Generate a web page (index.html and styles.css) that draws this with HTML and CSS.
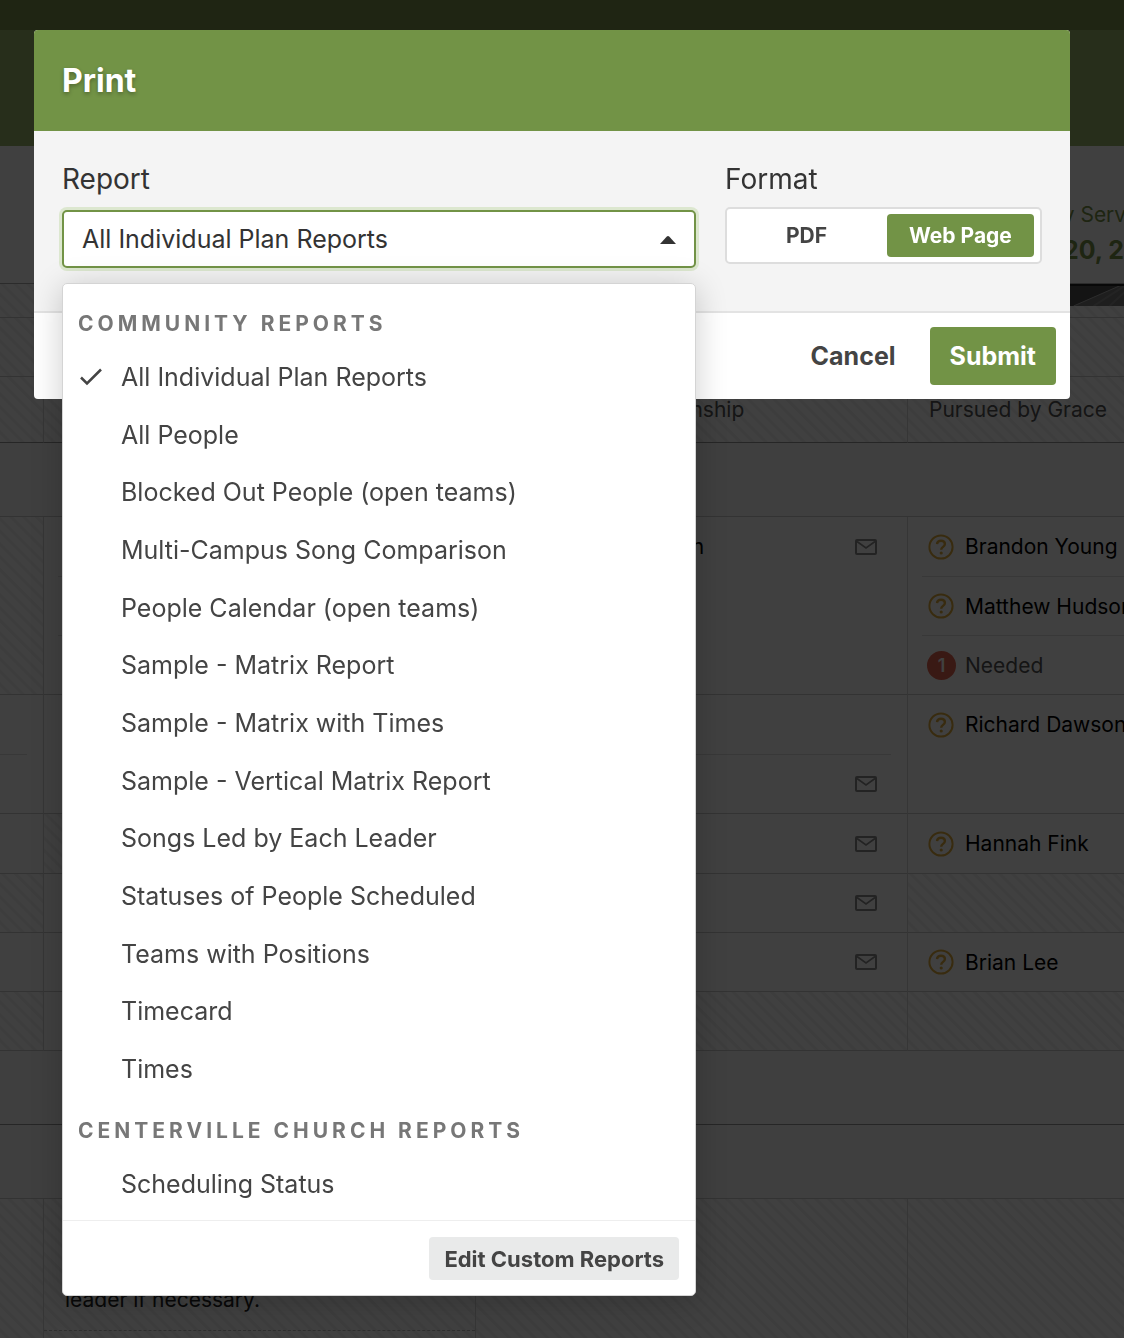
FILE: index.html
```
<!DOCTYPE html>
<html lang="en">
<head>
    <meta charset="UTF-8">
    <meta name="viewport" content="width=device-width, initial-scale=1.0">
    <title>Print</title>
    <link rel="stylesheet" href="styles.css">
</head>
<body>
    <svg class="sprite" aria-hidden="true">
        <symbol id="icon-mail" viewBox="0 0 22 16">
            <rect x="1" y="1" width="20" height="14" rx="1" fill="none" stroke="currentColor" stroke-width="2"/>
            <path d="M2 2.5l9 6.5 9-6.5" fill="none" stroke="currentColor" stroke-width="1.6"/>
        </symbol>
        <symbol id="icon-question" viewBox="0 0 26 26">
            <circle cx="13" cy="13" r="11.6" fill="none" stroke="currentColor" stroke-width="2"/>
            <path d="M9 10.2c.2-2.3 1.8-3.5 4-3.5s3.9 1.3 3.9 3.3c0 2.9-3.7 2.9-3.7 5.7" fill="none" stroke="currentColor" stroke-width="2.4"/>
            <circle cx="13.2" cy="19" r="1.6" fill="currentColor"/>
        </symbol>
    </svg>

    <div class="page">
        <div class="top-bar"></div>
        <div class="title-bar"></div>
        <table class="matrix">
            <colgroup>
                <col class="col-first">
                <col class="col-plan">
                <col class="col-plan">
                <col class="col-plan">
            </colgroup>
            <thead>
                <tr class="row-head">
                    <th></th>
                    <th></th>
                    <th></th>
                    <th class="plan-head">
                        <a href="#" class="plan-type">Family Sunday Service</a>
                        <a href="#" class="plan-date">November 20, 2022</a>
                    </th>
                </tr>
            </thead>
            <tbody>
                <tr class="row-art">
                    <td class="hatch"></td>
                    <td class="hatch"></td>
                    <td class="hatch"></td>
                    <td class="hatch">
                        <svg class="art" viewBox="0 0 432 22" preserveAspectRatio="none" aria-hidden="true">
                            <rect width="432" height="22" fill="#505050"/>
                            <path d="M166 22L216 0H432V22z" fill="#787878"/>
                            <path d="M166 22L214 1" stroke="#b0b0b0" stroke-width="1"/>
                            <path d="M186 22L220 0M202 22L226 0" stroke="#8c8c8c" stroke-width="2"/>
                            <path d="M0 1H432" stroke="#222" stroke-width="2"/>
                        </svg>
                    </td>
                </tr>
                <tr class="row">
                    <td class="hatch"></td>
                    <td class="hatch"></td>
                    <td class="hatch"></td>
                    <td class="hatch"></td>
                </tr>
                <tr class="row-series">
                    <td class="hatch"></td>
                    <td class="hatch"></td>
                    <td class="hatch series">The Point of Relationship</td>
                    <td class="hatch series">Pursued by Grace</td>
                </tr>
                <tr class="row-section">
                    <td colspan="4"></td>
                </tr>
                <tr>
                    <td class="hatch"></td>
                    <td>
                        <div class="person"></div>
                        <div class="person"></div>
                        <div class="person"></div>
                    </td>
                    <td>
                        <div class="person">
                            <span class="name indent">Jordan Anderson</span>
                            <svg class="mail"><use href="#icon-mail"/></svg>
                        </div>
                    </td>
                    <td>
                        <div class="person">
                            <svg class="question"><use href="#icon-question"/></svg>
                            <span class="name">Brandon Young</span>
                        </div>
                        <div class="person">
                            <svg class="question"><use href="#icon-question"/></svg>
                            <span class="name">Matthew Hudson</span>
                        </div>
                        <div class="person">
                            <span class="count">1</span>
                            <span class="needed">Needed</span>
                        </div>
                    </td>
                </tr>
                <tr>
                    <td>
                        <div class="person"></div>
                        <div class="person"></div>
                    </td>
                    <td></td>
                    <td>
                        <div class="person"></div>
                        <div class="person">
                            <svg class="mail"><use href="#icon-mail"/></svg>
                        </div>
                    </td>
                    <td>
                        <div class="person">
                            <svg class="question"><use href="#icon-question"/></svg>
                            <span class="name">Richard Dawson</span>
                        </div>
                    </td>
                </tr>
                <tr>
                    <td></td>
                    <td class="hatch"></td>
                    <td>
                        <div class="person">
                            <svg class="mail"><use href="#icon-mail"/></svg>
                        </div>
                    </td>
                    <td>
                        <div class="person">
                            <svg class="question"><use href="#icon-question"/></svg>
                            <span class="name">Hannah Fink</span>
                        </div>
                    </td>
                </tr>
                <tr class="row">
                    <td class="hatch"></td>
                    <td></td>
                    <td>
                        <div class="person single">
                            <svg class="mail"><use href="#icon-mail"/></svg>
                        </div>
                    </td>
                    <td class="hatch"></td>
                </tr>
                <tr class="row">
                    <td></td>
                    <td></td>
                    <td>
                        <div class="person single">
                            <svg class="mail"><use href="#icon-mail"/></svg>
                        </div>
                    </td>
                    <td>
                        <div class="person single">
                            <svg class="question"><use href="#icon-question"/></svg>
                            <span class="name">Brian Lee</span>
                        </div>
                    </td>
                </tr>
                <tr class="row">
                    <td class="hatch"></td>
                    <td></td>
                    <td class="hatch"></td>
                    <td class="hatch"></td>
                </tr>
                <tr class="row-section">
                    <td colspan="4"></td>
                </tr>
                <tr class="row-section light">
                    <td colspan="4"></td>
                </tr>
                <tr class="row-notes">
                    <td class="hatch"></td>
                    <td class="hatch">
                        <p class="note">leader if necessary.</p>
                    </td>
                    <td class="hatch"></td>
                    <td class="hatch"></td>
                </tr>
            </tbody>
        </table>
    </div>

    <div class="overlay">
        <form class="modal" role="dialog" aria-labelledby="modal-title">
            <div class="modal-header">
                <h1 id="modal-title">Print</h1>
            </div>
            <div class="modal-body">
                <div class="field">
                    <label class="field-label" for="report">Report</label>
                    <div class="select-wrap">
                        <select id="report" name="report">
                            <option>All Individual Plan Reports</option>
                        </select>
                        <svg class="caret" viewBox="0 0 16 8" aria-hidden="true"><path d="M0 8L6.8 .6q1.2-1.2 2.4 0L16 8z"/></svg>
                    </div>
                    <div class="menu">
                        <h2>Community Reports</h2>
                        <ul class="options options-main" role="listbox">
                            <li role="option" aria-selected="true">
                                <svg class="check" viewBox="0 0 22 18" aria-hidden="true"><path d="M1 9.5l6 6L21 1.500"/></svg>
                                All Individual Plan Reports
                            </li>
                            <li role="option">All People</li>
                            <li role="option">Blocked Out People (open teams)</li>
                            <li role="option">Multi-Campus Song Comparison</li>
                            <li role="option">People Calendar (open teams)</li>
                            <li role="option">Sample - Matrix Report</li>
                            <li role="option">Sample - Matrix with Times</li>
                            <li role="option">Sample - Vertical Matrix Report</li>
                            <li role="option">Songs Led by Each Leader</li>
                            <li role="option">Statuses of People Scheduled</li>
                            <li role="option">Teams with Positions</li>
                            <li role="option">Timecard</li>
                            <li role="option">Times</li>
                        </ul>
                        <h2>Centerville Church Reports</h2>
                        <ul class="options" role="listbox">
                            <li role="option">Scheduling Status</li>
                        </ul>
                        <div class="menu-footer">
                            <button type="button" class="edit-btn">Edit Custom Reports</button>
                        </div>
                    </div>
                </div>
                <fieldset class="field format">
                    <legend class="field-label">Format</legend>
                    <div class="segmented">
                        <input type="radio" name="format" id="format-pdf" value="pdf">
                        <label for="format-pdf">PDF</label>
                        <input type="radio" name="format" id="format-web" value="web" checked>
                        <label for="format-web">Web Page</label>
                    </div>
                </fieldset>
            </div>
            <div class="modal-footer">
                <button type="button" class="cancel-btn">Cancel</button>
                <button type="submit" class="submit-btn">Submit</button>
            </div>
        </form>
    </div>
</body>
</html>
```
FILE: styles.css
```
* {
    box-sizing: border-box;
}
body {
    margin: 0;
    height: 100vh;
    overflow: hidden;
    font-family: Inter, "Liberation Sans", sans-serif;
    color: #444;
}
button,
select {
    font-family: inherit;
}
.sprite {
    display: none;
}

/* schedule behind the dialog */
.page {
    height: 100vh;
    overflow: hidden;
    background-color: #fff;
}
.top-bar {
    height: 30px;
    background-color: #7c944c;
}
.title-bar {
    height: 116px;
    background-color: #9cb86c;
}
.matrix {
    width: 1340px;
    table-layout: fixed;
    border-collapse: separate;
    border-spacing: 0;
    font-size: 21px;
}
.col-first {
    width: 44px;
}
.col-plan {
    width: 432px;
}
.matrix th {
    padding: 0;
    border-bottom: 1px solid #aaa;
}
.matrix td {
    padding: 0;
    vertical-align: top;
    border-right: 1px solid #d8d8d8;
    border-bottom: 1px solid #ccc;
}
.hatch {
    background-image: repeating-linear-gradient(45deg, #fff 0, #fff 5px, #f3f3f3 6px, #f3f3f3 8px, #fff 9px);
}
.row-head {
    height: 138px;
}
.row-art {
    height: 34px;
}
.row {
    height: 59px;
}
.row-series {
    height: 66px;
}
.row-section {
    height: 74px;
}
.row-notes {
    height: 180px;
}
.matrix .row-series td,
.matrix .row-section td {
    border-bottom-color: #999;
}
.matrix .row-section td {
    background-color: #fbfbfb;
}
.matrix .row-series + .row-section td,
.matrix .light td {
    border-bottom-color: #ccc;
}
.plan-head {
    text-align: left;
    vertical-align: bottom;
}
.plan-head a {
    display: block;
    padding-left: 22px;
    color: #7a924a;
    text-decoration: none;
}
.plan-type {
    font-weight: 400;
    line-height: 34px;
}
.plan-date {
    margin-bottom: 15px;
    font-size: 25px;
    font-weight: 700;
    line-height: 36px;
}
.art {
    display: block;
    width: 100%;
    height: 22px;
}
.matrix .series {
    padding-left: 21px;
    vertical-align: middle;
    color: #555;
}
.person {
    display: flex;
    align-items: center;
    height: 59px;
    margin: 0 16px 0 14px;
    white-space: nowrap;
}
.matrix td:first-child .person {
    margin-left: 0;
}
.person + .person {
    border-top: 1px solid #ddd;
}
.single {
    height: 58px;
}
.name {
    color: #000;
}
.indent {
    padding-left: 43px;
}
.question {
    width: 26px;
    height: 26px;
    margin: 0 11px 0 6px;
    color: #e0ac3c;
}
.mail {
    width: 22px;
    height: 16px;
    margin-left: auto;
    margin-right: 14px;
    color: #8a8a8a;
}
.count {
    width: 29px;
    height: 29px;
    margin: 0 9px 0 5px;
    border-radius: 50%;
    background-color: #e46450;
    color: #fff;
    font-size: 18px;
    font-weight: 600;
    line-height: 29px;
    text-align: center;
}
.needed {
    color: #555;
}
.note {
    height: 132px;
    margin: 0;
    padding: 85px 21px 0;
    border-bottom: 1px dashed #bbb;
    color: #222;
    line-height: 32px;
}

/* dialog */
.overlay {
    position: fixed;
    inset: 0;
    padding: 30px 54px 0 34px;
    background-color: rgba(0, 0, 0, 0.75);
}
.modal {
    border-radius: 4px;
    background-color: #fff;
}
.modal-header {
    padding: 28px;
    border-radius: 4px 4px 0 0;
    background-color: #729346;
}
.modal-header h1 {
    margin: 0;
    color: #fff;
    font-size: 32px;
    font-weight: 700;
    line-height: 45px;
    text-shadow: 0 2px 4px rgba(0, 0, 0, 0.3);
}
.modal-body {
    display: grid;
    grid-template-columns: minmax(0, 2fr) minmax(0, 1fr);
    gap: 29px;
    padding: 28px 28px 43px;
    border-bottom: 2px solid #e3e3e3;
    background-color: #f4f4f4;
}
.field {
    position: relative;
    min-width: 0;
    margin: 0;
    padding: 0;
    border: none;
}
.field-label {
    display: block;
    padding: 0;
    color: #333;
    font-size: 28px;
    line-height: 40px;
}
.select-wrap {
    position: relative;
    margin-top: 11px;
}
select {
    display: block;
    width: 100%;
    height: 58px;
    padding: 0 18px;
    appearance: none;
    border: 2px solid #729346;
    border-radius: 5px;
    outline: none;
    background-color: #fff;
    box-shadow: 0 0 0 3px #dce7cf;
    color: #333;
    font-size: 25px;
}
.caret {
    position: absolute;
    top: 26px;
    right: 20px;
    width: 16px;
    height: 8px;
    fill: #333;
}
.menu {
    position: absolute;
    top: calc(100% + 15px);
    left: 0;
    right: 0;
    padding-top: 7px;
    border: 1px solid #d4d4d4;
    border-radius: 5px;
    background-color: #fff;
    box-shadow: 0 4px 32px rgba(0, 0, 0, 0.2);
}
.menu h2 {
    margin: 0;
    padding: 9px 15px 0;
    color: #777;
    font-size: 21px;
    font-weight: 700;
    letter-spacing: 4px;
    line-height: 48px;
    text-transform: uppercase;
}
.options {
    display: grid;
    min-height: 58px;
    margin: 0;
    padding: 0;
    list-style: none;
    font-size: 25px;
}
.options-main {
    min-height: 750px;
}
.options li {
    position: relative;
    display: flex;
    align-items: center;
    padding-left: 58px;
}
.check {
    position: absolute;
    left: 17px;
    width: 22px;
    height: 18px;
    fill: none;
    stroke: #444;
    stroke-width: 2.5;
}
.menu-footer {
    display: flex;
    justify-content: flex-end;
    margin-top: 7px;
    padding: 16px 16px 15px;
    border-top: 1px solid #eee;
}
.edit-btn {
    height: 43px;
    padding: 0 15px;
    border: none;
    border-radius: 4px;
    background-color: #e9eaea;
    color: #444;
    font-size: 22px;
    font-weight: 700;
}
.segmented {
    display: grid;
    grid-template-columns: 1fr 1fr;
    gap: 7px;
    margin-top: 8px;
    padding: 5px 6px;
    border: 2px solid #ddd;
    border-radius: 5px;
    background-color: #fff;
}
.segmented input {
    position: absolute;
    opacity: 0;
}
.segmented label {
    border-radius: 4px;
    font-size: 21px;
    font-weight: 700;
    line-height: 43px;
    text-align: center;
}
.segmented input:checked + label {
    background-color: #729346;
    color: #fff;
}
.modal-footer {
    display: flex;
    justify-content: flex-end;
    gap: 14px;
    padding: 14px;
}
.cancel-btn,
.submit-btn {
    height: 58px;
    padding: 0 20px;
    border: none;
    border-radius: 4px;
    background-color: transparent;
    color: #444;
    font-size: 25px;
    font-weight: 700;
}
.submit-btn {
    background-color: #729346;
    color: #fff;
}
```
